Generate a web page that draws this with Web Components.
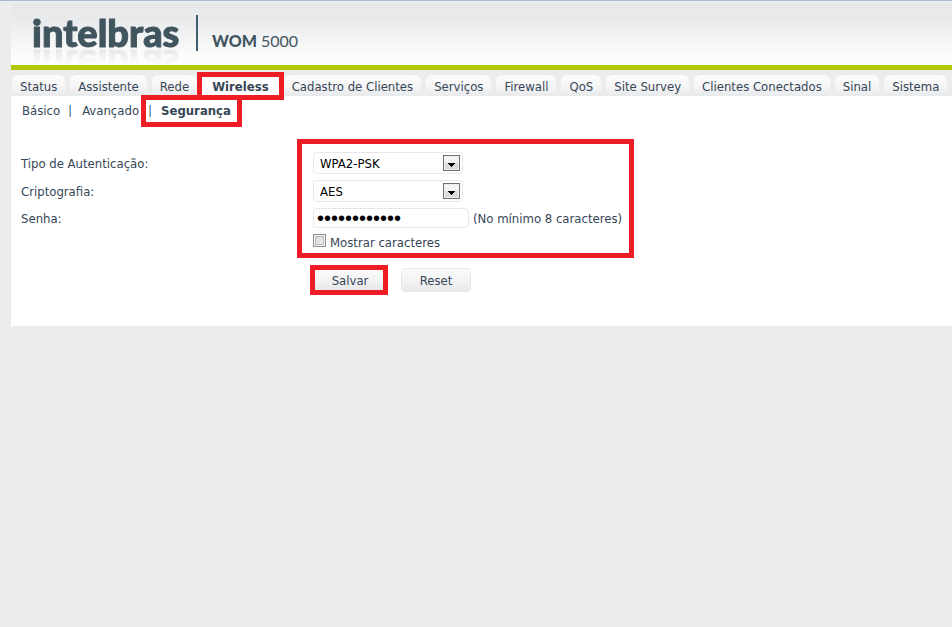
<!DOCTYPE html>
<html lang="pt-BR">
<head>
<meta charset="utf-8">
<title>WOM 5000</title>
<style>
    body {
        margin: 0;
        background: #ebedec;
        color: #364656;
        font: 13px/16px "DejaVu Sans Condensed", Tahoma, "DejaVu Sans", sans-serif;
    }
</style>
</head>
<body>
<router-page>
    <page-header slot="header" model="WOM" number="5000"></page-header>
    <tab-bar slot="tabs">
        <tab-item>Status</tab-item>
        <tab-item>Assistente</tab-item>
        <tab-item>Rede</tab-item>
        <tab-item active>Wireless</tab-item>
        <tab-item>Cadastro de Clientes</tab-item>
        <tab-item>Serviços</tab-item>
        <tab-item>Firewall</tab-item>
        <tab-item>QoS</tab-item>
        <tab-item>Site Survey</tab-item>
        <tab-item>Clientes Conectados</tab-item>
        <tab-item>Sinal</tab-item>
        <tab-item>Sistema</tab-item>
    </tab-bar>
    <sub-menu></sub-menu>
    <security-form></security-form>
</router-page>

<script>
class RouterPage extends HTMLElement {
    constructor() {
        super();
        this.attachShadow({mode: "open"}).innerHTML = `
        <style>
            :host {
                display: block;
                border-top: 1px solid #a9b9d3;
                padding: 3px 0 0 11px;
            }
            main {
                background: #fff;
                padding: 0 10px 34px;
            }
        </style>
        <slot name="header"></slot>
        <slot name="tabs"></slot>
        <main><slot></slot></main>`;
    }
}

class PageHeader extends HTMLElement {
    constructor() {
        super();
        this.shadowDOM = this.attachShadow({mode: "open"});
    }

    connectedCallback() {
        this.shadowDOM.innerHTML = `
        <style>
            :host {
                display: flex;
                height: 61px;
                padding-left: 21px;
                border-bottom: 5px solid #b1c800;
                background: linear-gradient(#e6e7e9, #e9eaec 25%, #fbfcfb 85%, #fdfdfd);
                overflow: hidden;
                color: #41555f;
            }
            .brand {
                width: 150px;
                margin-top: 10px;
                height: 36px;
                font: 900 38px/36px Lato, sans-serif;
                -webkit-text-stroke: 1px #41555f;
                -webkit-box-reflect: below -3px linear-gradient(transparent 50%, rgba(0, 0, 0, .12));
            }
            .line {
                width: 2px;
                height: 36px;
                margin: 11px 14px 0;
                background: #41606e;
            }
            .model {
                margin-top: 27px;
                font: 16px/20px Lato, sans-serif;
            }
            b {
                font-weight: 900;
            }
        </style>
        <div class="brand">intelbras</div>
        <div class="line"></div>
        <div class="model"><b>${this.getAttribute("model")}</b> ${this.getAttribute("number")}</div>`;
    }
}

class TabBar extends HTMLElement {
    constructor() {
        super();
        this.attachShadow({mode: "open"}).innerHTML = `
        <style>
            :host {
                display: block;
                padding: 5px 0 0 1px;
            }
            nav {
                display: flex;
                gap: 5px;
            }
        </style>
        <nav><slot></slot></nav>`;
    }
}

class TabItem extends HTMLElement {
    constructor() {
        super();
        this.attachShadow({mode: "open"}).innerHTML = `
        <style>
            :host {
                display: block;
                flex: none;
            }
            a {
                display: block;
                padding: 4px 8px 1px;
                border-radius: 6px 6px 0 0;
                background: linear-gradient(#fcfcfc, #f6f6f7 50%, #e8e9eb);
                color: inherit;
                text-decoration: none;
            }
            :host([active]) {
                position: relative;
                z-index: 1;
                padding-top: 2px;
            }
            :host([active]) a {
                padding: 2px 10px 0;
                background: #fff;
                font-weight: bold;
                outline: 5px solid #ee1c25;
                border-radius: 0;
            }
        </style>
        <a href="#"><slot></slot></a>`;
    }
}

class SubMenu extends HTMLElement {
    constructor() {
        super();
        this.attachShadow({mode: "open"}).innerHTML = `
        <style>
            :host {
                display: flex;
                padding-top: 7px;
                padding-left: 1px;
            }
            a {
                color: inherit;
                text-decoration: none;
            }
            a + a {
                margin-left: 9px;
                padding-left: 13px;
                background: linear-gradient(90deg, #d9b48c 1px, #4fa0e0 1px) 0 2px / 2px 12px no-repeat;
            }
            a.current {
                margin-left: 10px;
                padding-left: 12px;
                padding-right: 3px;
                font-weight: bold;
                outline: 5px solid #ee1c25;
                outline-offset: 3px;
            }
        </style>
        <a href="#">Básico</a>
        <a href="#">Avançado</a>
        <a href="#" class="current">Segurança</a>`;
    }
}

class SelectBox extends HTMLElement {
    constructor() {
        super();
        this.attachShadow({mode: "open"}).innerHTML = `
        <style>
            :host {
                display: block;
                position: relative;
                width: 150px;
            }
            ::slotted(select) {
                appearance: none;
                box-sizing: border-box;
                width: 100%;
                height: 22px;
                padding: 2px 24px 0 6px;
                border: 1px solid #e8e8ea;
                border-radius: 4px;
                background: #fff;
                color: #000;
                font: inherit;
            }
            svg {
                position: absolute;
                top: 3px;
                right: 3px;
                pointer-events: none;
            }
        </style>
        <slot></slot>
        <svg width="17" height="16">
            <rect x=".5" y=".5" width="16" height="15" fill="#eee" stroke="#707070"/>
            <path d="M2 2h13v6H2z" fill="#f4f4f4"/>
            <path d="M2 8h13v6H2z" fill="#dcdcdc"/>
            <path d="M5 8h7v1h-1v1h-1v1H9v1H8v-1H7v-1H6V9H5z" fill="#000"/>
        </svg>`;
    }
}

class SecurityForm extends HTMLElement {
    constructor() {
        super();
        this.attachShadow({mode: "open"}).innerHTML = `
        <style>
            :host {
                display: block;
                padding-top: 33px;
            }
            form {
                display: grid;
                grid-template-columns: 292px 1fr;
                grid-template-rows: 22px 22px 20px 16px 36px;
                row-gap: 6px;
                align-items: center;
            }
            .field {
                grid-column: 2;
                display: flex;
                align-items: center;
                gap: 4px;
            }
            /* red frame round the four fields */
            .frame {
                grid-column: 2;
                grid-row: 1 / 5;
                justify-self: start;
                align-self: stretch;
                box-sizing: border-box;
                width: 337px;
                margin: -13px 0 -8px -16px;
                border: 5px solid #ee1c25;
                pointer-events: none;
            }
            label, span {
                padding-top: 2px;
            }
            .name {
                grid-column: 1;
            }
            .r1 { grid-row: 1; }
            .r2 { grid-row: 2; }
            .r3 { grid-row: 3; }
            .r4 { grid-row: 4; }
            .r5 { grid-row: 5; }
            .check {
                align-self: start;
                align-items: flex-start;
            }
            .check label {
                padding-top: 1px;
            }
            input[type=password] {
                box-sizing: border-box;
                width: 156px;
                height: 20px;
                padding: 1px 3px 0;
                border: 1px solid #e8e8ea;
                border-radius: 4px;
                background: #fff;
                color: #000;
                font: 20px/18px "Liberation Sans", Arial, sans-serif;
            }
            input[type=checkbox] {
                appearance: none;
                width: 13px;
                height: 13px;
                margin: 0;
                border: 1px solid #8e8f8f;
                background: linear-gradient(135deg, #cfd2d6, #f6f6f6);
                box-shadow: inset 0 0 0 1px #f4f4f4, inset 0 0 0 2px #b8bcc0;
            }
            .buttons {
                align-self: end;
                gap: 17px;
                padding-left: 1px;
            }
            button {
                box-sizing: border-box;
                width: 70px;
                height: 24px;
                padding: 2px 0 0;
                border: 1px solid #e6e7e9;
                border-radius: 4px;
                background: linear-gradient(#fafafa, #f4f4f5 50%, #e6e7e9);
                color: inherit;
                font: inherit;
            }
            button.save {
                height: 22px;
                padding-left: 2px;
                outline: 5px solid #ee1c25;
                outline-offset: -1px;
                border-radius: 0;
            }
        </style>
        <form>
            <div class="frame"></div>
            <label class="name r1" for="auth">Tipo de Autenticação:</label>
            <div class="field r1">
                <select-box><select id="auth"><option>WPA2-PSK</option></select></select-box>
            </div>
            <label class="name r2" for="cipher">Criptografia:</label>
            <div class="field r2">
                <select-box><select id="cipher"><option>AES</option></select></select-box>
            </div>
            <label class="name r3" for="password">Senha:</label>
            <div class="field r3">
                <input type="password" id="password" value="123456789012">
                <span>(No mínimo 8 caracteres)</span>
            </div>
            <div class="field check r4">
                <input type="checkbox" id="show">
                <label for="show">Mostrar caracteres</label>
            </div>
            <div class="field buttons r5">
                <button type="button" class="save">Salvar</button>
                <button type="reset">Reset</button>
            </div>
        </form>`;
    }
}

customElements.define("router-page", RouterPage);
customElements.define("page-header", PageHeader);
customElements.define("tab-bar", TabBar);
customElements.define("tab-item", TabItem);
customElements.define("sub-menu", SubMenu);
customElements.define("select-box", SelectBox);
customElements.define("security-form", SecurityForm);
</script>
</body>
</html>
